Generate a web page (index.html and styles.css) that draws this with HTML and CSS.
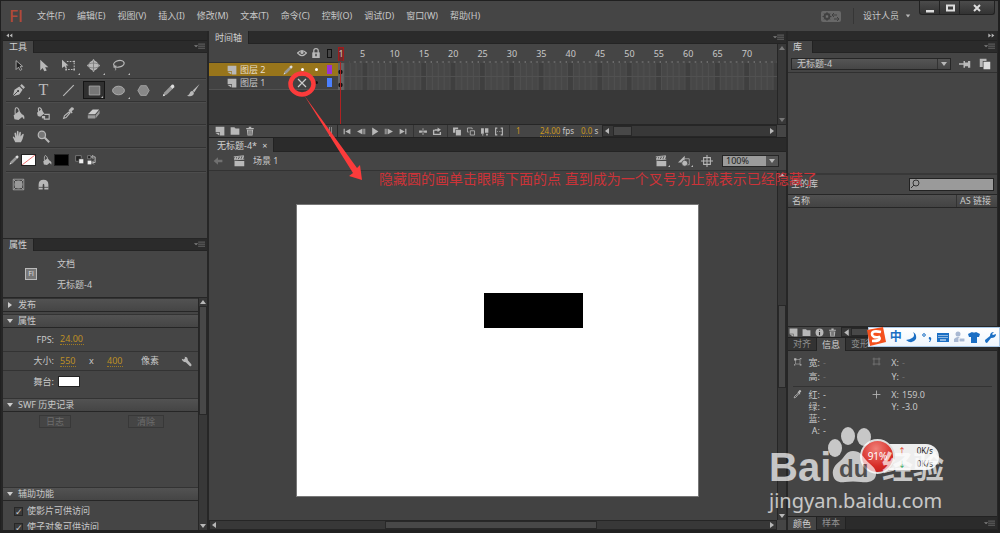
FILE: index.html
```html
<!DOCTYPE html>
<html lang="zh-CN">
<head>
<meta charset="utf-8">
<title>Fl</title>
<link rel="stylesheet" href="styles.css">
</head>
<body>
<svg class="sprite" aria-hidden="true">
  <symbol id="subselect" viewBox="0 0 16 16"><path d="M5 2v11l3-3 2 4 2-1-2-4h3z" fill="#222" stroke="#bbb"/></symbol>
  <symbol id="select" viewBox="0 0 16 16"><path d="M4 1v13l3-3 2 4 3-1-2-4h4z"/></symbol>
  <symbol id="transform" viewBox="0 0 16 16"><path d="M0 1v10l3-2 2 3 1-1-1-3h3z"/><path d="M6 3h9v10H5" fill="none" stroke="currentColor" stroke-width="1.3" stroke-dasharray="2 1.5"/><path d="M14 2h2v2h-2zM14 12h2v2h-2zM4 12h2v2H4z"/></symbol>
  <symbol id="rotate3d" viewBox="0 0 16 16"><circle cx="8" cy="8" r="6"/><ellipse cx="8" cy="8" rx="7.500" ry="3" fill="none" stroke="#777" /><path d="M8 2v12" stroke="#777"/><path d="M6 2l2-2 2 2zM6 14l2 2 2-2zM2 6L0 8l2 2zM14 6l2 2-2 2z"/></symbol>
  <symbol id="lasso" viewBox="0 0 16 16"><ellipse cx="8.500" cy="6" rx="6.500" ry="4" fill="none" stroke="currentColor" stroke-width="1.500" transform="rotate(-12 8 6)"/><path d="M4 8c-3 1-2 4 0 2s1-2 0-1 2 3 0 5" fill="none" stroke="currentColor"/></symbol>
  <symbol id="pen" viewBox="0 0 16 16"><path d="M1 15L3 7l6-4 4 4-4 6zM10 2l2-2 4 4-2 2z"/><path d="M1 15l6-6" stroke="#333"/><circle cx="7.500" cy="8.500" r="1.200" fill="#333"/></symbol>
  <symbol id="line" viewBox="0 0 16 16"><path d="M1.500 14.500l13-13" stroke="currentColor" stroke-width="1.400"/></symbol>
  <symbol id="rect" viewBox="0 0 16 16"><path d="M1.500 2.500h13v11h-13z" fill="#777" stroke="#aaa"/></symbol>
  <symbol id="oval" viewBox="0 0 16 16"><ellipse cx="8" cy="8" rx="7.300" ry="5.300" fill="#888" stroke="#bbb"/></symbol>
  <symbol id="poly" viewBox="0 0 16 16"><path d="M4.500 2h7l3.500 6-3.500 6h-7L1 8z" fill="#888" stroke="#aaa"/></symbol>
  <symbol id="pencil" viewBox="0 0 16 16"><path d="M1 15l2-5 7-7 3 3-7 7z" fill="#999"/><path d="M1 15l1-3 2 2zM11 2l1-1q2-1 3 1t-1 3l-1 1-3-3z" fill="#ddd"/></symbol>
  <symbol id="brush" viewBox="0 0 16 16"><path d="M15.500 0L7 8l2 2zM6 8.500Q4 8.500 3 12q-1 2-3 2.500 6 2 8-1.500 1-2-.500-4z"/></symbol>
  <symbol id="bucket" viewBox="0 0 16 16"><path d="M2 10l7-5 5 6-6 5-5-1zM13 9q3 2 2 6-3-1-2-6z"/><path d="M4 9Q3 0 6 1t3 7" fill="none" stroke="currentColor" stroke-width="1.300"/></symbol>
  <symbol id="ink" viewBox="0 0 16 16"><path d="M0 7l5-4 4 5-5 4-3-1z"/><path d="M2 6Q1 0 3.500 1T6 6M9 9h6v6H9v-3" fill="none" stroke="currentColor" stroke-width="1.400"/><path d="M6 11h4v3H6z"/></symbol>
  <symbol id="dropper" viewBox="0 0 16 16"><path d="M8 4l4 4 1-1-1-2q4-2 2-4t-4 1L9 3z"/><path d="M2 14L3 11l6-5 1 1-5 6z" fill="none" stroke="currentColor" stroke-width="1.400"/></symbol>
  <symbol id="eraser" viewBox="0 0 16 16"><path d="M1 9l6-6h8l-5 6z" fill="#ccc"/><path d="M1 10h9v4H1zM10.500 10l5-6v4l-5 6z" fill="#999"/></symbol>
  <symbol id="hand" viewBox="0 0 16 16"><path d="M4 15L1 9q0-2 2 0l1 1L3 4q1-2 2 0l1 4V2q1-2 2 0v6l1-5q1-2 2 0l-.500 5L13 5q1-1 1.500.500L13 11l-2 4z"/></symbol>
  <symbol id="magnify" viewBox="0 0 16 16"><path d="M9 9l6 6" stroke="currentColor" stroke-width="2.500"/><circle cx="6" cy="6" r="4.500" fill="#777" stroke="currentColor" stroke-width="1.500"/></symbol>
  <symbol id="swapdef" viewBox="0 0 16 16"><path d="M1 1h9v9H1z" fill="#222" stroke="#999"/><path d="M6 6h8v8H6z" fill="#eee" stroke="#222"/></symbol>
  <symbol id="swap" viewBox="0 0 16 16"><path d="M1 1h5v5H1z" fill="#222" stroke="#999"/><path d="M1 9h6v6H1z" fill="#eee"/><path d="M8 3h5v9H9M10 0L7 3l3 3M11 9l-3 3 3 3" fill="none" stroke="currentColor" stroke-width="1.600"/></symbol>
  <symbol id="object" viewBox="0 0 16 16"><path d="M1.500 1.500h13v13h-13z" fill="#444" stroke="#aaa"/><circle cx="8" cy="8" r="5" fill="#999"/><path d="M2 2l3 3M14 2l-3 3M2 14l3-3M14 14l-3-3" stroke="#aaa"/></symbol>
  <symbol id="magnet" viewBox="0 0 16 16"><path d="M7 14H2V8q0-6 6-6t6 6v6H9V9q0-2-1-2T7 9z"/><path d="M2 11.500h12" stroke="#444"/></symbol>
  <symbol id="menu" viewBox="0 0 16 10"><path d="M0 3h6L3 6z"/><path d="M6 1.500h10M6 4.500h10M6 7.500h10" stroke="currentColor"/></symbol>
  <symbol id="layer" viewBox="0 0 16 16"><path d="M1 1h14v14H8v-5H1z"/><path d="M1 11h6v4z"/></symbol>
  <symbol id="folder" viewBox="0 0 16 16"><path d="M1 2h6l2 2h6v10H1z"/></symbol>
  <symbol id="trash" viewBox="0 0 16 16"><path d="M6 1h4v2h4v2H2V3h4zM3 6h10l-1 9H4z"/><path d="M6 7v7M8 7v7M10 7v7" stroke="#444"/></symbol>
  <symbol id="eye" viewBox="0 0 16 12"><path d="M1 6q7-8 14 0-7 8-14 0z" fill="none" stroke="currentColor" stroke-width="2"/><circle cx="8" cy="5" r="2.500"/></symbol>
  <symbol id="lock" viewBox="0 0 16 16"><path d="M2 7h12v9H2z"/><path d="M4.500 8V4q0-3 3.500-3t3.500 3v4" fill="none" stroke="currentColor" stroke-width="2"/><path d="M8 9v4" stroke="#333" stroke-width="2"/></symbol>
  <symbol id="first" viewBox="0 0 16 16"><path d="M2 3h2v10H2zM14 3v10L5 8z"/></symbol>
  <symbol id="prev" viewBox="0 0 16 16"><path d="M10 3v10L1 8zM11 3h1.500v10H11zM14 3h1.500v10H14z"/></symbol>
  <symbol id="play" viewBox="0 0 16 16"><path d="M3 1l11 7-11 7z"/></symbol>
  <symbol id="next" viewBox="0 0 16 16"><path d="M6 3v10l9-5zM.500 3H2v10H.500zM3.500 3H5v10H3.500z"/></symbol>
  <symbol id="last" viewBox="0 0 16 16"><path d="M12 3h2v10h-2zM2 3v10l9-5z"/></symbol>
  <symbol id="center" viewBox="0 0 16 16"><path d="M1 6h5v4H1zM10 6h5v4h-5zM7.300 2h1.400v12H7.300zM5 7.500h6v1H5z"/></symbol>
  <symbol id="loop" viewBox="0 0 16 16"><path d="M4 6H2v7h12V9" fill="none" stroke="currentColor" stroke-width="2.400"/><path d="M4 4h5V1l6 4-6 4V6.500H4z"/></symbol>
  <symbol id="onion" viewBox="0 0 16 16"><path d="M1 1h9v3H5v6H1z"/><path d="M6 5h9v10H6z"/></symbol>
  <symbol id="onionout" viewBox="0 0 16 16"><path d="M10 4V1.700H1.700V9H4M6.700 6.700h7.600v7.600H6.700z" fill="none" stroke="currentColor" stroke-width="1.500"/></symbol>
  <symbol id="multi" viewBox="0 0 16 16"><path d="M1 2h5v10H1zM8 2h6v8H8zM10 12h3v3h-3zM3 13h2v2H3z"/></symbol>
  <symbol id="marks" viewBox="0 0 16 16"><path d="M5 2H2v12h3M11 2h3v12h-3M5 8h1M8 8h1M11 8h1" fill="none" stroke="currentColor" stroke-width="2"/></symbol>
  <symbol id="back" viewBox="0 0 16 16"><path d="M1 8l7-6v4h7v4H8v4z"/></symbol>
  <symbol id="clap" viewBox="0 0 16 16"><path d="M2 8h13v7H2z"/><path d="M1.500 6.500L15 5.500M1 2.500L14.500 1" stroke="currentColor" stroke-width="1.200"/><path d="M2 6l2-3M5 6l2-3.500M8.500 6l2-4M12 5.500l2-4" stroke="currentColor" stroke-width="2"/></symbol>
  <symbol id="symbols" viewBox="0 0 16 16"><path d="M0 10L9 1v9z"/><path d="M9 5h6v8H9" fill="none" stroke="currentColor"/><circle cx="9" cy="11" r="4" stroke="#444"/></symbol>
  <symbol id="cross" viewBox="0 0 16 16"><path d="M3.500 3.500h9v9h-9zM8 0v16M0 8h16" fill="none" stroke="currentColor" stroke-width="1.400"/></symbol>
  <symbol id="pin" viewBox="0 0 16 16"><path d="M0 7h6v2H0zM6 4h2v2h4V4h3v9h-3v-2H8v2H6z"/></symbol>
  <symbol id="copy" viewBox="0 0 16 16"><path d="M1 1h9v3H5v8H1z"/><path d="M6 5h9v10H6z" fill="#ddd"/></symbol>
  <symbol id="info" viewBox="0 0 16 16"><circle cx="8" cy="8" r="7"/><path d="M8 3v2M8 7v6" stroke="#333" stroke-width="2"/></symbol>
  <symbol id="wrench" viewBox="0 0 16 16"><path d="M1 4l3 1 2-2-1-2q5 0 5 5l5 6q1 3-2 3L7 9Q2 9 1 4z"/></symbol>
  <symbol id="size" viewBox="0 0 16 16"><path d="M4.500 4.500h8v8h-8z" fill="none" stroke="currentColor"/><path d="M2 2h4v4H2zM12 2h3v2h-3zM2 13h2v2H2zM12 13h3v2h-3z"/></symbol>
  <symbol id="grid" viewBox="0 0 16 16"><path d="M3.500 1v14M12.500 1v14M1 3.500h14M1 12.500h14" stroke="currentColor" stroke-width="1.500"/></symbol>
  <symbol id="plus" viewBox="0 0 16 16"><path d="M8 1v14M1 8h14" stroke="currentColor" stroke-width="1.500"/></symbol>
  <symbol id="up" viewBox="0 0 8 8"><path d="M4 2l3 4H1z"/></symbol>
  <symbol id="down" viewBox="0 0 8 8"><path d="M4 6L1 2h6z"/></symbol>
  <symbol id="left" viewBox="0 0 8 8"><path d="M2 4l4-3v6z"/></symbol>
  <symbol id="right" viewBox="0 0 8 8"><path d="M6 4L2 1v6z"/></symbol>
</svg>

<div class="app">
  <header class="titlebar">
    <span class="logo">Fl</span>
    <nav class="menus">
      <button>文件(F)</button><button>编辑(E)</button><button>视图(V)</button><button>插入(I)</button><button>修改(M)</button><button>文本(T)</button><button>命令(C)</button><button>控制(O)</button><button>调试(D)</button><button>窗口(W)</button><button>帮助(H)</button>
    </nav>
    <button class="sync" aria-label="同步设置"><svg viewBox="0 0 20 11"><rect width="20" height="11" rx="2" fill="#686868"/><circle cx="6" cy="5.500" r="2.600" fill="none" stroke="#404040" stroke-width="1.600"/><path d="M6 1v9M1.500 5.500h9M3 2.500l6 6M9 2.500l-6 6" stroke="#404040"/><circle cx="6" cy="5.500" r="1.200" fill="#707070"/><path d="M11 4h5M13 2l-2 2 2 2M13 8h5M16 6l2 2-2 2" fill="none" stroke="#404040"/></svg></button>
    <button class="workspace">设计人员 <svg class="i6"><use href="#down"/></svg></button>
    <div class="winbtns">
      <button aria-label="最小化"><svg viewBox="0 0 12 12"><path d="M2 8h8v2.500H2z"/></svg></button>
      <button aria-label="还原"><svg viewBox="0 0 12 12"><path d="M3 3.500h7v5H3z" fill="none" stroke="#ddd" stroke-width="2"/></svg></button>
      <button class="wide" aria-label="关闭"><svg viewBox="0 0 12 12"><path d="M3 3l6 6M9 3l-6 6" stroke="#ddd" stroke-width="2"/></svg></button>
    </div>
  </header>

  <div class="workarea">
    <aside class="left">
      <div class="strip"><svg viewBox="0 0 12 8"><path d="M6 1v6L2 4zM11 1v6L7 4z"/></svg></div>
      <div class="tabs"><button class="tab on">工具</button><button class="pmenu" aria-label="面板菜单"><svg><use href="#menu"/></svg></button></div>
      <section class="tools">
        <div class="trow first"><button aria-label="选择"><svg><use href="#subselect"/></svg></button><button aria-label="部分选取"><svg><use href="#select"/></svg></button><button class="more" aria-label="任意变形"><svg><use href="#transform"/></svg></button><button class="more" aria-label="3D 旋转"><svg><use href="#rotate3d"/></svg></button><button class="more" aria-label="套索"><svg><use href="#lasso"/></svg></button></div>
        <div class="trow"><button class="more" aria-label="钢笔"><svg><use href="#pen"/></svg></button><button class="type">T</button><button aria-label="线条"><svg><use href="#line"/></svg></button><button class="more active" aria-label="矩形"><svg><use href="#rect"/></svg></button><button class="more" aria-label="椭圆"><svg><use href="#oval"/></svg></button><button aria-label="多角星形"><svg><use href="#poly"/></svg></button><button aria-label="铅笔"><svg><use href="#pencil"/></svg></button><button aria-label="刷子"><svg><use href="#brush"/></svg></button></div>
        <div class="trow"><button aria-label="颜料桶"><svg><use href="#bucket"/></svg></button><button aria-label="墨水瓶"><svg><use href="#ink"/></svg></button><button aria-label="滴管"><svg><use href="#dropper"/></svg></button><button aria-label="橡皮擦"><svg><use href="#eraser"/></svg></button></div>
        <div class="trow"><button aria-label="手形"><svg><use href="#hand"/></svg></button><button aria-label="缩放"><svg><use href="#magnify"/></svg></button></div>
        <div class="trow colors"><svg><use href="#pencil"/></svg><button class="swatch none" aria-label="笔触颜色"><svg viewBox="0 0 14 11" preserveAspectRatio="none"><path d="M0 11L14 0" stroke="#e66"/></svg></button><svg><use href="#bucket"/></svg><button class="swatch black" aria-label="填充颜色"></button><svg><use href="#swapdef"/></svg><svg><use href="#swap"/></svg></div>
        <div class="trow"><button aria-label="对象绘制"><svg><use href="#object"/></svg></button><button aria-label="贴紧至对象"><svg><use href="#magnet"/></svg></button></div>
      </section>
      <div class="tabs prop"><button class="tab on">属性</button><button class="pmenu" aria-label="面板菜单"><svg><use href="#menu"/></svg></button></div>
      <section class="docinfo"><span class="flicon">Fl</span><div><p>文档</p><p>无标题-4</p></div></section>
      <div class="propbody">
        <div class="proplist">
          <button class="head"><svg><use href="#right"/></svg>发布</button>
          <button class="head spaced"><svg><use href="#down"/></svg>属性</button>
          <div class="prow"><label for="fps">FPS:</label><input id="fps" class="hot w24" value="24.00"></div>
          <div class="prow size"><label for="w">大小:</label><input id="w" class="hot w16" value="550"><span class="by">x</span><input class="hot w16" value="400" aria-label="高度"><span class="unit">像素</span><button class="wr" aria-label="文档设置"><svg><use href="#wrench"/></svg></button></div>
          <div class="prow stagerow"><label for="bg">舞台:</label><button id="bg" class="stagecolor" aria-label="舞台颜色"></button></div>
          <button class="head"><svg><use href="#down"/></svg>SWF 历史记录</button>
          <div class="history"><button disabled>日志</button><button disabled>清除</button></div>
          <button class="head"><svg><use href="#down"/></svg>辅助功能</button>
          <div class="checks"><label><input type="checkbox" checked>使影片可供访问</label><label><input type="checkbox" checked>使子对象可供访问</label></div>
        </div>
        <div class="vs"><svg><use href="#up"/></svg><i class="thumb t-prop"></i><b></b><svg><use href="#down"/></svg></div>
      </div>
    </aside>

    <main class="center">
      <div class="tabs tl"><button class="tab on">时间轴</button><button class="pmenu" aria-label="面板菜单"><svg><use href="#menu"/></svg></button></div>
      <section class="timeline">
        <div class="layers">
          <div class="lrow lhead"><span></span><span></span><svg><use href="#eye"/></svg><svg><use href="#lock"/></svg><i class="outl"></i></div>
          <div class="lrow sel"><span class="lname"><svg><use href="#layer"/></svg>图层 2</span><svg><use href="#pencil"/></svg><em></em><em></em><i class="purple"></i></div>
          <div class="lrow"><span class="lname"><svg><use href="#layer"/></svg>图层 1</span><span></span><svg class="x" viewBox="0 0 10 10"><path d="M1 1l8 8M9 1L1 9" stroke="#ccc" stroke-width="1.200"/></svg><em class="dark"></em><i class="blue"></i></div>
        </div>
        <div class="frames">
          <div class="ruler"><span class="cur">1</span><span>5</span><span>10</span><span>15</span><span>20</span><span>25</span><span>30</span><span>35</span><span>40</span><span>45</span><span>50</span><span>55</span><span>60</span><span>65</span><span>70</span></div>
          <svg class="ticks" viewBox="0 0 299 2" preserveAspectRatio="none"><pattern id="tk" width="4" height="2" patternUnits="userSpaceOnUse"><path d="M3.500 0v2" stroke="#777" stroke-width=".700"/></pattern><path d="M8 0h291v2H8z" fill="url(#tk)"/></svg>
          <svg class="cells" viewBox="0 0 299 27" preserveAspectRatio="none"><defs><pattern id="fr" width="20" height="14" patternUnits="userSpaceOnUse"><path d="M0 0h20v14H0z" fill="#474747"/><path d="M16 0h4v14h-4z" fill="#3f3f3f"/><path d="M.300 0v14M4.300 0v14M8.300 0v14M12.300 0v14M16.300 0v14" stroke="#525252" stroke-width=".600"/><path d="M0 13.500h20" stroke="#515151"/></pattern></defs><path d="M0 0h299v27H0z" fill="url(#fr)"/><path d="M0 0h4v27H0z" fill="#656565"/><ellipse cx="1.700" cy="9" rx="1.500" ry="2.200" fill="#111"/><ellipse cx="1.700" cy="22" rx="1.500" ry="2.200" fill="#111"/></svg>
          <i class="playline"></i>
        </div>
        <div class="vs dim"><svg><use href="#up"/></svg><b></b><svg><use href="#down"/></svg></div>
      </section>
      <div class="tlfoot">
        <div class="lbtns"><button aria-label="新建图层"><svg><use href="#layer"/></svg></button><button aria-label="新建文件夹"><svg><use href="#folder"/></svg></button><button aria-label="删除"><svg><use href="#trash"/></svg></button><i class="grip"></i></div>
        <div class="pbtns"><button aria-label="第一帧"><svg><use href="#first"/></svg></button><button aria-label="后退"><svg><use href="#prev"/></svg></button><button aria-label="播放"><svg><use href="#play"/></svg></button><button aria-label="前进"><svg><use href="#next"/></svg></button><button aria-label="最后一帧"><svg><use href="#last"/></svg></button></div>
        <div class="pbtns"><button aria-label="帧居中"><svg><use href="#center"/></svg></button><button aria-label="循环"><svg><use href="#loop"/></svg></button></div>
        <div class="pbtns"><button aria-label="绘图纸外观"><svg><use href="#onion"/></svg></button><button aria-label="绘图纸轮廓"><svg><use href="#onionout"/></svg></button><button aria-label="编辑多帧"><svg><use href="#multi"/></svg></button><button aria-label="修改标记"><svg><use href="#marks"/></svg></button></div>
        <div class="vals"><span class="hv frame">1</span><span class="fpsv"><span class="hv">24.00</span> fps</span><span><span class="hv">0.0</span> s</span></div>
        <div class="hs"><svg><use href="#left"/></svg><i class="thumb t-tl"></i><b></b><svg><use href="#right"/></svg></div>
        <span class="corner"></span>
      </div>
      <div class="tabs doc"><button class="tab on">无标题-4* <span>×</span></button></div>
      <div class="scenebar">
        <button class="bk" aria-label="返回"><svg><use href="#back"/></svg></button><svg class="clap"><use href="#clap"/></svg><span>场景 1</span>
        <div class="sceneright"><button class="more" aria-label="编辑场景"><svg><use href="#clap"/></svg></button><button class="more" aria-label="编辑元件"><svg><use href="#symbols"/></svg></button><button aria-label="舞台居中"><svg><use href="#cross"/></svg></button>
        <span class="zoom"><select aria-label="缩放"><option>100%</option></select><svg><use href="#down"/></svg></span></div>
      </div>
      <div class="canvasrow">
        <div class="pasteboard"><div class="stage"><div class="shape"></div></div></div>
        <div class="vs"><svg><use href="#up"/></svg><i class="gap-c"></i><i class="thumb t-c"></i><b></b><svg><use href="#down"/></svg></div>
      </div>
      <div class="hsrow"><div class="hs"><svg><use href="#left"/></svg><b></b><i class="thumb t-h"></i><b></b><svg><use href="#right"/></svg></div><span class="corner"></span></div>
    </main>

    <aside class="right">
      <div class="strip end"><svg viewBox="0 0 12 8"><path d="M2 1v6l4-3zM7 1v6l4-3z"/></svg></div>
      <div class="tabs"><button class="tab on">库</button><button class="pmenu" aria-label="面板菜单"><svg><use href="#menu"/></svg></button></div>
      <div class="libbar"><span class="libsel"><select aria-label="文档"><option>无标题-4</option></select><svg><use href="#down"/></svg></span><button aria-label="固定"><svg><use href="#pin"/></svg></button><button aria-label="新建库面板"><svg><use href="#copy"/></svg></button></div>
      <div class="preview"></div>
      <div class="search"><label for="q">空的库</label><span class="sbox"><svg viewBox="0 0 10 10"><circle cx="6" cy="4" r="3" fill="none" stroke="#333"/><path d="M4 6L1 9" stroke="#333"/></svg><input id="q" type="search"></span></div>
      <div class="lhd"><span>名称</span><span>AS 链接</span></div>
      <div class="liblist"></div>
      <div class="libfoot"><button aria-label="新建元件"><svg><use href="#layer"/></svg></button><button aria-label="新建文件夹"><svg><use href="#folder"/></svg></button><button aria-label="属性"><svg><use href="#info"/></svg></button><button aria-label="删除"><svg><use href="#trash"/></svg></button><div class="hs"><svg><use href="#left"/></svg><i class="thumb t-l"></i><b></b></div></div>
      <div class="tabs multi"><button class="tab">对齐</button><button class="tab on">信息</button><button class="tab">变形</button></div>
      <section class="info">
        <div class="ig wh"><svg><use href="#size"/></svg><dl><dt>宽:</dt><dd class="off">-</dd><dt>高:</dt><dd class="off">-</dd></dl><svg class="faint"><use href="#grid"/></svg><dl><dt>X:</dt><dd class="off">-</dd><dt>Y:</dt><dd class="off">-</dd></dl></div>
        <div class="ig rgb"><svg><use href="#dropper"/></svg><dl><dt>红:</dt><dd>-</dd><dt>绿:</dt><dd>-</dd><dt>蓝:</dt><dd>-</dd><dt>A:</dt><dd>-</dd></dl><svg><use href="#plus"/></svg><dl><dt>X:</dt><dd>159.0</dd><dt>Y:</dt><dd>-3.0</dd></dl></div>
      </section>
      <div class="tabs multi"><button class="tab on">颜色</button><button class="tab">样本</button><button class="pmenu" aria-label="面板菜单"><svg><use href="#menu"/></svg></button></div>
    </aside>
  </div>

  <svg class="arrow" viewBox="0 0 76 112"><ellipse cx="15" cy="15" rx="11.500" ry="10.500" fill="none" stroke="#fb3b3b" stroke-width="4.500"/><path d="M17 26l49 78-4 3 13 4-2-15-3 3z" fill="#fb3b3b"/></svg>
  <p class="note">隐藏圆的画单击眼睛下面的点 直到成为一个叉号为止就表示已经隐藏了</p>

  <div class="ime">
    <svg class="s" viewBox="0 0 20 20"><path d="M1 3L17 0l3 15L4 19z" fill="#f4511e" /><path d="M15 5Q6 3 6 7t7 3q3 4-7 4" fill="none" stroke="#fff" stroke-width="2.600"/></svg>
    <b>中</b>
    <svg viewBox="0 0 12 12"><path d="M8 1q4 6-7 8 6 5 10-1 1-5-3-7z"/></svg>
    <svg viewBox="0 0 12 12"><circle cx="3" cy="4" r="1.300" fill="none" stroke="#1b6fc4"/><path d="M8 6q4 0 1 5H8l1-2q-2-1-1-3z"/></svg>
    <svg viewBox="0 0 12 12"><path d="M0 2h12v9H0z"/><path d="M1.500 4.500h9M1.500 6.500h9" stroke="#fff" stroke-dasharray="1 1"/><path d="M3 9h6" stroke="#fff"/></svg>
    <svg class="pale" viewBox="0 0 12 12"><circle cx="5" cy="3" r="2.500"/><path d="M1 11V8q4-4 8 0v3z"/><path d="M6 7h6v4H6z" stroke="#fff"/></svg>
    <svg viewBox="0 0 12 12"><path d="M0 3l4-2q2 1 4 0l4 2-1 3H9v6H3V6H1z"/></svg>
    <svg viewBox="0 0 12 12"><path d="M1 9l5-4q0-4 4-4L8 3l1 1 3-1q0 4-5 4l-4 5q-2 0-2-3z"/></svg>
  </div>
  <div class="speed"><div class="rates"><p><i class="u">↑</i>0K/s</p><p><i class="d">↓</i>0K/s</p></div><span class="ball">91%</span></div>
  <div class="mark">
    <div class="brand"><span>Bai</span><span class="paw"><svg viewBox="0 0 58 56"><ellipse cx="7" cy="21" rx="7" ry="9"/><ellipse cx="20" cy="9" rx="7" ry="9"/><ellipse cx="36" cy="10" rx="7" ry="9"/><path d="M25 24c-7 0-8 6-13 10s-8 8-7 14 6 8 12 7q8-1 16 0c8 1 15-1 15-8S42 38 38 33s-6-9-13-9z"/></svg><b>du</b></span><span class="exp">经验</span></div>
    <div class="url">jingyan.baidu.com</div>
  </div>
</div>
</body>
</html>
```
FILE: styles.css
```css
* { box-sizing: border-box; }
body { margin: 0; background: #454545; color: #c8c8c8; font: 9px/12px "Noto Sans", "Noto Sans CJK SC", sans-serif; overflow: hidden; }
p, dl, dd { margin: 0; }
i, em { font-style: normal; }
button { font: inherit; color: inherit; background: none; border: 0; padding: 0; margin: 0; }
input, select { font: inherit; color: inherit; }
svg { fill: currentColor; color: #b8b8b8; display: block; flex: none; width: 10px; height: 10px; }
.sprite { position: absolute; width: 0; height: 0; }
.app { position: relative; min-height: 100vh; display: flex; flex-direction: column; border: solid #202020; border-width: 1px 2px 3px 1px; }

.titlebar { height: 30px; flex: none; display: flex; align-items: center; padding: 0 3px 0 8px; }
.logo { width: 28px; font: 500 17px/20px "Noto Sans", sans-serif; color: #b24a38; }
.menus { flex: 1; display: flex; gap: 12px; }
.menus button { white-space: nowrap; }
.sync svg { width: 20px; height: 11px; }
.workspace { display: flex; align-items: center; gap: 6px; border-left: 1px solid #363636; margin-left: 12px; padding-left: 9px; height: 16px; }
.i6 { width: 6px; height: 6px; }
.winbtns { align-self: flex-start; display: flex; margin-left: 8px; height: 14px; border: 1px solid #222; border-top: 0; background: linear-gradient(#4b4b4b, #333); border-radius: 0 0 3px 3px; }
.winbtns button { width: 20px; display: flex; justify-content: center; align-items: center; border-right: 1px solid #222; }
.winbtns .wide { width: 34px; border: 0; }
.winbtns svg { width: 12px; height: 12px; color: #ddd; }

.workarea { flex: 1; display: grid; grid-template-columns: 204px minmax(0, 1fr) 209px; gap: 2px; padding: 0 1px 0 2px; background: #262626; }
.left, .center, .right { display: flex; flex-direction: column; background: #454545; min-width: 0; }
.strip { height: 10px; flex: none; background: #2a2a2a; border-bottom: 1px solid #222; padding: 1px 2px; display: flex; }
.strip svg { width: 8px; height: 7px; }
.strip.end { justify-content: flex-end; }
.tabs { height: 12px; flex: none; display: flex; background: #2b2b2b; border-bottom: 1px solid #242424; }
.tab { padding: 0 6px; color: #8f8f8f; border-right: 1px solid #222; white-space: nowrap; line-height: 12px; background: #333; }
.tab.on { color: #d2d2d2; background: #454545; margin-bottom: -1px; }
.pmenu { margin-left: auto; padding-right: 2px; display: flex; align-items: center; }
.pmenu svg { width: 11px; height: 7px; color: #808080; }

.trow { height: 23px; display: flex; align-items: center; margin: 0 1px 0 3px; border-top: 1px solid #333; box-shadow: inset 0 1px #4d4d4d; }
.trow.first { border: 0; height: 25px; box-shadow: none; }
.trow button { width: 25px; height: 18px; display: flex; align-items: center; justify-content: center; }
.trow svg { width: 13px; height: 13px; }
.more { position: relative; }
.more::after { content: ""; position: absolute; right: 1px; bottom: 0; border: 1px solid #bbb; border-top-color: transparent; border-left-color: transparent; }
.trow .active { width: 22px; margin-right: 1px; margin-left: 2px; background: #303030; border: 1px solid #151515; }
.trow .type { font: 16px/18px "Liberation Serif", serif; color: #bbb; }
.trow.colors { gap: 2px; padding-left: 3px; height: 24px; }
.trow.colors > svg { width: 10px; height: 10px; }
.trow .swatch { width: 15px; height: 12px; border: 1px solid #222; background: #fff; margin-right: 4px; }
.trow .swatch svg { width: 13px; height: 10px; }
.trow .black { background: #000; }
.tools .trow:last-child { height: 67px; padding-bottom: 41px; }
.prop { border-top: 1px solid #262626; height: 13px; }
.docinfo { display: flex; gap: 20px; padding: 4px 22px; align-items: center; height: 46px; flex: none; }
.docinfo p { line-height: 21px; }
.flicon { width: 12px; height: 12px; font: 7px/10px "Noto Sans", sans-serif; text-align: center; color: #ddd; background: #777; border: 1px solid #bbb; }
.propbody { flex: 1 1 0; min-height: 0; display: flex; border-top: 1px solid #262626; }
.proplist { flex: 1; overflow: hidden; }
.head { display: flex; width: 100%; height: 14px; align-items: center; gap: 4px; padding-left: 3px; background: linear-gradient(#525252, #454545); border-bottom: 1px solid #262626; border-top: 1px solid #333; }
.head svg { width: 8px; height: 8px; color: #ccc; }
.spaced { margin-top: 2px; }
.prow { display: flex; align-items: center; height: 24px; border-bottom: 1px solid #333; }
.prow label { width: 51px; text-align: right; margin-right: 6px; }
.prow.size { height: 19px; }
.prow.stagerow { height: 27px; border: 0; padding-bottom: 6px; }
.prow.stagerow label { margin-right: 4px; }
.hot { padding: 0; height: 11px; border: 0; border-bottom: 1px dotted #a07a20; background: none; color: #bd8f25; }
.w24 { width: 24px; } .w16 { width: 16px; }
.by { width: 31px; text-align: center; }
.unit { margin-left: 18px; flex: 1; }
.wr { margin-right: 6px; }
.wr svg { width: 11px; height: 11px; }
.stagecolor { width: 22px; height: 11px; background: #fff; border: 1px solid #222; }
.history { display: flex; height: 75px; padding: 3px 12px 0 36px; }
.history button { height: 13px; padding: 0 6px; line-height: 11px; border: 1px solid #383838; color: #6d6d6d; }
.history button:last-child { margin-left: 57px; padding: 0 8px; }
.checks { padding: 2px 11px 0; }
.checks label { display: flex; align-items: center; gap: 4px; height: 16px; line-height: 12px; white-space: nowrap; }
.checks input { appearance: none; width: 9px; height: 9px; margin: 0; border: 1px solid #272727; background: #3b3b3b; display: grid; place-items: center; }
.checks input::before { content: "✓"; font: bold 9px/9px "DejaVu Sans", sans-serif; }

.vs { width: 9px; flex: none; background: #383838; border-left: 1px solid #262626; display: flex; flex-direction: column; align-items: center; }
.vs svg, .hs svg { width: 8px; height: 8px; flex: none; }
.vs b, .hs b { flex: 1; }
.thumb { background: #484848; border: 1px solid #282828; flex: none; }
.vs .thumb { width: 8px; }
.t-prop { height: 47%; }
.hs { display: flex; align-items: center; background: #383838; border: 1px solid #262626; min-width: 0; }
.hs .thumb { align-self: stretch; }
.dim svg { color: #777; }
.corner { width: 9px; background: #454545; flex: none; }

.tl { height: 13px; }
.timeline { height: 80px; display: grid; grid-template-columns: 129px minmax(0, 1fr) 9px; background: #383838; }
.lrow { display: grid; grid-template-columns: 1fr 15px 14px 14px 12px; padding-right: 3px; height: 14px; align-items: center; justify-items: center; background: #424242; border-bottom: 1px solid #525252; }
.lrow.lhead { height: 19px; background: #454545; border-bottom: 1px solid #333; }
.lrow.sel { background: #98751b; border: 0; color: #e8dfc8; height: 13px; }
.lname { justify-self: start; display: flex; align-items: center; gap: 3px; padding-left: 18px; white-space: nowrap; }
.lrow em { width: 3px; height: 3px; border-radius: 50%; background: #fff; }
.lrow .dark { background: #111; }
.lrow i { width: 5px; height: 9px; }
.outl { border: 1px solid #111; }
.purple { background: #9a32d2; }
.blue { background: #4b80ff; }
.frames { position: relative; display: flex; flex-direction: column; }
.ruler { display: grid; grid-template-columns: 15fr repeat(13, 20fr) 24fr; height: 17px; padding-top: 3px; background: #454545; line-height: 14px; }
.ruler .cur { width: 6px; height: 15px; background: #75282a; outline: 1px solid #a01c1c; outline-offset: -1px; text-align: center; }
.frames .ticks { width: 100%; height: 2px; background: #454545; }
.frames .cells { width: 100%; height: 27px; }
.playline { position: absolute; left: 2px; top: 18px; bottom: 0; width: 1px; background: #b02222; }
.tlfoot { height: 13px; display: flex; background: #454545; border-top: 1px solid #262626; }
.lbtns { width: 129px; display: flex; align-items: center; gap: 5px; padding-left: 6px; border-right: 1px solid #2a2a2a; }
.grip { margin-left: auto; margin-right: 5px; width: 3px; height: 9px; border: solid #888; border-width: 0 1px; }
.pbtns { display: flex; align-items: center; gap: 4px; padding: 0 5px 0 4px; border-right: 1px solid #333; }
.pbtns svg { width: 10px; height: 9px; }
.vals { display: flex; align-items: center; padding-left: 6px; white-space: nowrap; font-size: 8px; }
.frame { width: 4px; margin-right: 20px; }
.fpsv { margin-right: 7px; }
.hv { color: #c9951e; border-bottom: 1px dotted #a07a20; }
.tlfoot .hs { flex: 1; margin-left: 4px; }
.t-tl { width: 19px; margin-left: 2px; }
.doc { height: 15px; border-top: 1px solid #222; }
.doc .tab { line-height: 13px; padding: 0 5px 0 8px; }
.doc .tab span { margin-left: 3px; }
.scenebar { height: 19px; display: flex; align-items: center; padding: 0 7px 0 4px; border-bottom: 1px solid #333; }
.bk svg { color: #707070; }
.clap { width: 12px; height: 12px; margin: 0 8px 0 10px; }
.sceneright { margin-left: auto; display: flex; align-items: center; gap: 11px; }
.sceneright svg { width: 12px; height: 12px; }
.sceneright .more::after { right: -3px; }
.zoom { display: flex; align-items: center; width: 57px; height: 12px; border: 1px solid #262626; margin-left: -2px; background: #555; }
.zoom select, .libsel select { appearance: none; border: 0; padding: 0 3px; margin: 0; flex: 1; height: 100%; min-width: 0; border-radius: 0; background: #9c9c9c; color: #222; line-height: 10px; }
.zoom svg, .libsel svg { width: 8px; height: 8px; margin: 0 2px; }
.canvasrow { flex: 1; display: flex; background: #424242; }
.pasteboard { flex: 1; display: flex; align-items: center; justify-content: center; padding: 10px 0 0 8px; }
.stage { position: relative; width: 403px; height: 293px; background: #fff; border: 1px solid #777; }
.shape { position: absolute; left: 187px; top: 88px; width: 99px; height: 35px; background: #000; }
.gap-c { height: 36%; }
.t-c { height: 24%; }
.hsrow { display: flex; height: 10px; }
.hsrow .hs { flex: 1; }
.hsrow .hs b:first-of-type { flex: 167; }
.hsrow .hs b { flex: 171; }
.t-h.thumb { flex: 211; }

.right .tab { padding: 0 5px; }
.right > .tabs:not(.multi) .tab { padding-right: 10px; }
.libbar { display: flex; align-items: center; height: 20px; gap: 8px; padding: 2px 6px 0 3px; border-bottom: 1px solid #303030; }
.libsel { flex: 1; display: flex; align-items: center; height: 12px; border: 1px solid #262626; background: linear-gradient(#555, #464646); }
.libsel select { background: none; color: #c8c8c8; padding-left: 5px; border-right: 1px solid #333; }
.libbar button svg { width: 12px; height: 12px; }
.preview { height: 101px; flex: 101 1 auto; border-bottom: 2px solid #383838; }
.search { height: 19px; display: flex; align-items: center; justify-content: space-between; padding: 0 3px; }
.sbox { width: 85px; height: 13px; display: flex; align-items: center; background: #9a9a9a; border: 1px solid #222; }
.sbox input { flex: 1; min-width: 0; height: 100%; padding: 0 2px; border: 0; background: none; appearance: none; }
.lhd { height: 14px; display: flex; justify-content: space-between; padding: 0 6px 0 4px; background: linear-gradient(#505050, #434343); border: solid #262626; border-width: 1px 0; }
.lhd span + span { border-left: 1px solid #333; padding-left: 3px; }
.liblist { height: 117px; flex: 117 1 auto; }
.libfoot { height: 11px; display: flex; align-items: center; gap: 4px; padding-left: 1px; border-top: 1px solid #262626; }
.libfoot svg { width: 9px; height: 9px; }
.libfoot .hs { flex: 1; height: 10px; }
.t-l { width: 76px; }
.multi { height: 14px; border-top: 1px solid #222; }
.info { padding: 5px 5px 0; height: 165px; flex: none; }
.ig { display: grid; grid-template-columns: 15px 64px 15px 1fr; }
.ig dl { display: grid; grid-template-columns: 12px 1fr; column-gap: 3px; align-content: start; line-height: 12px; }
.ig dt { text-align: right; white-space: nowrap; }
.wh { height: 31px; border-bottom: 1px solid #333; }
.wh dl { line-height: 14px; }
.rgb { padding-top: 2px; }
.off { color: #707070; }
.faint { color: #777; }
.ig svg { width: 9px; height: 9px; margin-top: 1px; }

.arrow { position: absolute; left: 286px; top: 68px; width: 76px; height: 112px; }
.note { position: absolute; left: 378px; top: 168px; font-size: 14px; line-height: 20px; color: #cc3338; white-space: nowrap; }
.ime { position: absolute; right: -2px; top: 326px; width: 132px; height: 20px; display: flex; align-items: center; justify-content: space-between; padding-right: 3px; background: linear-gradient(#fff, #eef5fc); border: 1px solid #a9c9e8; color: #1b6fc4; }
.ime svg { width: 12px; height: 12px; color: #1b6fc4; }
.ime .s { width: 20px; height: 20px; margin-left: -3px; }
.ime .pale { color: #a9b9d3; }
.ime b { font-size: 12px; line-height: 16px; }
.speed { position: absolute; right: 59px; top: 438px; width: 79px; height: 36px; display: flex; align-items: center; justify-content: flex-end; }
.rates { width: 50px; padding: 0 6px 0 9px; background: #eee; border-radius: 0 13px 13px 0; font-size: 8px; color: #222; }
.rates p { display: flex; justify-content: space-between; line-height: 13px; }
.u { color: #e03020; } .d { color: #20a050; }
.ball { position: absolute; left: 0; top: 0; width: 35px; height: 35px; border: 2px solid #ddd; border-radius: 50%; background: radial-gradient(circle at 45% 25%, #f08078, #d72b26 60%, #b81818); color: #fff; text-align: center; font-size: 10px; line-height: 31px; }
.mark { position: absolute; right: 54px; top: 425px; color: #fff; opacity: .7; }
.brand { display: flex; align-items: flex-end; height: 62px; font: bold 40px/42px "Liberation Sans", sans-serif; }
.brand > span:first-child { width: 59px; }
.paw { position: relative; width: 54px; height: 62px; }
.paw svg { width: 58px; height: 58px; color: #fff; }
.paw b { position: absolute; left: 11px; top: 29px; font: bold 24px/28px "Liberation Sans", sans-serif; color: #555; }
.exp { font: bold 31px/36px "Noto Sans CJK SC", sans-serif; padding-bottom: 5px; }
.url { font: 20px/25px "Noto Sans", sans-serif; }
```
